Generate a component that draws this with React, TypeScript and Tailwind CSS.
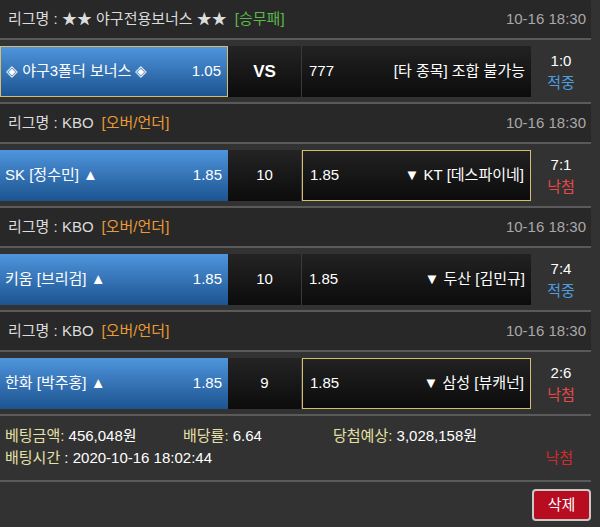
import React from "react";

type Side = {
  label: string;
  odds: string;
  picked?: boolean;
};

type Bet = {
  league: string;
  kind: string;
  kindColor: string;
  time: string;
  home: Side;
  mid: string;
  midBold?: boolean;
  away: Side;
  score: string;
  result: "hit" | "miss";
};

const bets: Bet[] = [
  {
    league: "★★ 야구전용보너스 ★★",
    kind: "[승무패]",
    kindColor: "text-[#5cb84a]",
    time: "10-16 18:30",
    home: { label: "◈ 야구3폴더 보너스 ◈", odds: "1.05", picked: true },
    mid: "VS",
    midBold: true,
    away: { label: "[타 종목] 조합 불가능", odds: "777" },
    score: "1:0",
    result: "hit",
  },
  {
    league: "KBO",
    kind: "[오버/언더]",
    kindColor: "text-[#e89a35]",
    time: "10-16 18:30",
    home: { label: "SK [정수민] ▲", odds: "1.85" },
    mid: "10",
    away: { label: "▼ KT [데스파이네]", odds: "1.85", picked: true },
    score: "7:1",
    result: "miss",
  },
  {
    league: "KBO",
    kind: "[오버/언더]",
    kindColor: "text-[#e89a35]",
    time: "10-16 18:30",
    home: { label: "키움 [브리검] ▲", odds: "1.85" },
    mid: "10",
    away: { label: "▼ 두산 [김민규]", odds: "1.85" },
    score: "7:4",
    result: "hit",
  },
  {
    league: "KBO",
    kind: "[오버/언더]",
    kindColor: "text-[#e89a35]",
    time: "10-16 18:30",
    home: { label: "한화 [박주홍] ▲", odds: "1.85" },
    mid: "9",
    away: { label: "▼ 삼성 [뷰캐넌]", odds: "1.85", picked: true },
    score: "2:6",
    result: "miss",
  },
];

const BetSection = ({ bet }: { bet: Bet }) => {
  return (
    <div>
      <div className="h-[40px] bg-[#282828] border-b-2 border-[#5a5a5a] flex items-center justify-between pl-[8px] pr-[5px]">
        <span className="text-[#dcdcdc]">
          리그명 : {bet.league}
          <span className={`ml-[8px] ${bet.kindColor}`}>{bet.kind}</span>
        </span>
        <span className="text-[#a8a8a8]">{bet.time}</span>
      </div>
      <div className="flex items-center pt-[6px] pb-[5px] h-[64px] border-b-2 border-[#5a5a5a]">
        <div
          className={`w-[228px] h-[51px] flex items-center justify-between pl-[5px] pr-[6px] text-white bg-gradient-to-b from-[#4f95dd] to-[#1c5490] ${
            bet.home.picked ? "border border-[#d8bd6e]" : ""
          }`}
        >
          <span>{bet.home.label}</span>
          <span>{bet.home.odds}</span>
        </div>
        <div
          className={`w-[74px] h-[51px] flex items-center justify-center text-white bg-gradient-to-b from-[#242424] to-[#0c0c0c] border-r border-[#3a3a3a] ${
            bet.midBold ? "font-bold text-[17px]" : ""
          }`}
        >
          {bet.mid}
        </div>
        <div
          className={`w-[229px] h-[51px] flex items-center justify-between pl-[7px] pr-[6px] text-white bg-gradient-to-b from-[#222222] to-[#0c0c0c] ${
            bet.away.picked ? "border border-[#d8bd6e]" : ""
          }`}
        >
          <span>{bet.away.odds}</span>
          <span>{bet.away.label}</span>
        </div>
        <div className="w-[60px] flex flex-col items-center leading-[22px]">
          <span className="text-white">{bet.score}</span>
          <span className={bet.result === "hit" ? "text-[#4e9ee0]" : "text-[#e84848]"}>
            {bet.result === "hit" ? "적중" : "낙첨"}
          </span>
        </div>
      </div>
    </div>
  );
};

export default function App() {
  return (
    <div
      className="w-[600px] h-[527px] bg-[#323232] text-[15px] overflow-hidden"
      style={{ fontFamily: '"Liberation Sans", "Noto Sans CJK KR", sans-serif' }}
    >
      <div className="w-[591px]">
        {bets.map((b, i) => (
          <BetSection key={i} bet={b} />
        ))}
        <div className="h-[66px] border-b-2 border-[#5a5a5a] pl-[5px] pt-[9px] leading-[22px] relative">
          <div className="flex">
            <span className="w-[178px]">
              <span className="text-[#e6e0a6]">베팅금액:</span>
              <span className="text-white"> 456,048원</span>
            </span>
            <span className="w-[150px]">
              <span className="text-[#e6e0a6]">배당률:</span>
              <span className="text-white"> 6.64</span>
            </span>
            <span>
              <span className="text-[#e6e0a6]">당첨예상:</span>
              <span className="text-white"> 3,028,158원</span>
            </span>
          </div>
          <div className="flex justify-between pr-[18px]">
            <span>
              <span className="text-[#e6e0a6]">배팅시간</span>
              <span className="text-white"> : 2020-10-16 18:02:44</span>
            </span>
            <span className="text-[#d42a2e]">낙첨</span>
          </div>
        </div>
        <div className="flex justify-end pt-[7px] pr-[0px]">
          <button className="w-[59px] h-[32px] rounded-[4px] bg-[#b80c20] border-2 border-[#c9c9c9] text-white text-[15px]">
            삭제
          </button>
        </div>
      </div>
    </div>
  );
}
